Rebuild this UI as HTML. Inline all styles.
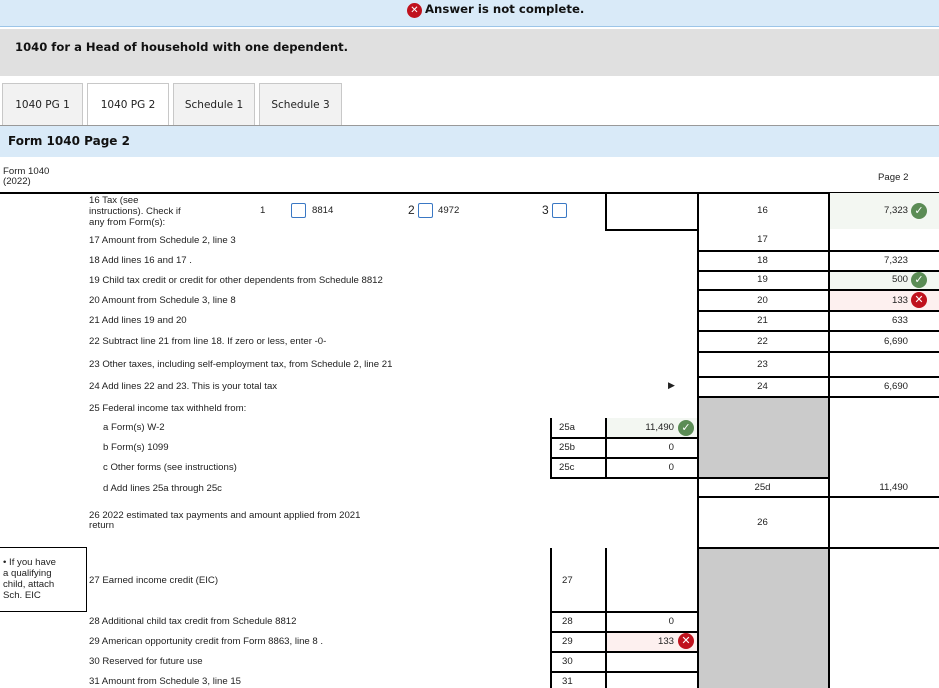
<!DOCTYPE html>
<html><head><meta charset="utf-8"><style>
*{margin:0;padding:0;box-sizing:border-box}
body{width:939px;height:688px;position:relative;overflow:hidden;background:#fff;font-family:"Liberation Sans",Arial,sans-serif;color:#222}
div{position:absolute}
.h{height:1.5px;background:#000}
.v{width:1.5px;background:#000}
.t{font-size:9.6px;white-space:nowrap;line-height:11px}
.c{text-align:center}
.r{text-align:right}
.ic{width:16px;height:16px;border-radius:50%;color:#fff;font-size:11px;font-weight:bold;text-align:center;line-height:16px;font-family:"DejaVu Sans",sans-serif}
.ok{background:#5b8c55}
.no{background:#c0121d}
.cb{width:15px;height:15px;border:1px solid #3a78c4;border-radius:2px;background:#fff}
.tab{top:83px;height:43px;border:1px solid #c8c8c8;border-bottom:none;background:#f2f2f2;font-family:"DejaVu Sans",Verdana,sans-serif;font-size:10.5px;text-align:center;line-height:42px;color:#222}
</style></head><body>
<div style="left:0;top:0;width:939px;height:27px;background:#d9eaf8;border-bottom:1px solid #9cc5e8"></div>
<div class="ic no" style="left:407px;top:3px;width:15px;height:15px;line-height:15px;font-size:10px">✕</div>
<div style="left:425px;top:2px;font-family:'DejaVu Sans',Verdana,sans-serif;font-weight:bold;font-size:11.7px;color:#111">Answer is not complete.</div>
<div style="left:0;top:29px;width:939px;height:47px;background:#e0e0e0"></div>
<div style="left:15px;top:40px;font-family:'DejaVu Sans',Verdana,sans-serif;font-weight:bold;font-size:11.6px;color:#111">1040 for a Head of household with one dependent.</div>
<div class="tab" style="left:2px;width:81px">1040 PG 1</div>
<div class="tab" style="left:87px;width:82px;background:#fff;height:44px">1040 PG 2</div>
<div class="tab" style="left:173px;width:82px">Schedule 1</div>
<div class="tab" style="left:259px;width:83px">Schedule 3</div>
<div style="left:0;top:125px;width:939px;height:1px;background:#999"></div>
<div style="left:0;top:126px;width:939px;height:31px;background:#d9eaf8"></div>
<div style="left:8px;top:134px;font-family:'DejaVu Sans',Verdana,sans-serif;font-weight:bold;font-size:12px;color:#111">Form 1040 Page 2</div>

<div class="t" style="left:3px;top:167px;line-height:10px">Form 1040<br>(2022)</div>
<div class="t" style="left:878px;top:172px">Page 2</div>
<div class="h" style="left:0;top:192px;width:939px"></div>

<div style="left:828px;top:193px;width:111px;height:36px;background:#f3f7f2"></div>
<div style="left:828px;top:271px;width:111px;height:18px;background:#f3f7f2"></div>
<div style="left:828px;top:290px;width:111px;height:20px;background:#fdf0ef"></div>
<div style="left:605px;top:418px;width:92px;height:19px;background:#f3f7f2"></div>
<div style="left:605px;top:631px;width:92px;height:20px;background:#fdf0ef"></div>
<div style="left:697px;top:396px;width:131px;height:81px;background:#cbcbcb"></div>
<div style="left:697px;top:547px;width:131px;height:141px;background:#cbcbcb"></div>

<div class="v" style="left:697px;top:192px;height:496px"></div>
<div class="v" style="left:828px;top:192px;height:496px"></div>
<div class="v" style="left:605px;top:192px;height:37px"></div>
<div class="v" style="left:550px;top:418px;height:59px"></div>
<div class="v" style="left:605px;top:418px;height:59px"></div>
<div class="v" style="left:550px;top:548px;height:140px"></div>
<div class="v" style="left:605px;top:548px;height:140px"></div>

<div class="h" style="left:605px;top:229px;width:92px"></div>
<div class="h" style="left:697px;top:250px;width:242px"></div>
<div class="h" style="left:697px;top:270px;width:242px"></div>
<div class="h" style="left:697px;top:289px;width:242px"></div>
<div class="h" style="left:697px;top:310px;width:242px"></div>
<div class="h" style="left:697px;top:330px;width:242px"></div>
<div class="h" style="left:697px;top:351px;width:242px"></div>
<div class="h" style="left:697px;top:376px;width:242px"></div>
<div class="h" style="left:697px;top:396px;width:242px"></div>
<div class="h" style="left:550px;top:437px;width:147px"></div>
<div class="h" style="left:550px;top:457px;width:147px"></div>
<div class="h" style="left:550px;top:477px;width:278px"></div>
<div class="h" style="left:697px;top:496px;width:242px"></div>
<div class="h" style="left:697px;top:547px;width:242px"></div>
<div class="h" style="left:550px;top:611px;width:147px"></div>
<div class="h" style="left:550px;top:631px;width:147px"></div>
<div class="h" style="left:550px;top:651px;width:147px"></div>
<div class="h" style="left:550px;top:671px;width:147px"></div>

<div style="left:0;top:547px;width:87px;height:65px;border:1.5px solid #000;border-left:none"></div>
<div class="t" style="left:3px;top:557px;line-height:11px">• If you have<br>a qualifying<br>child, attach<br>Sch. EIC</div>

<div class="t" style="left:89px;top:195px;line-height:11px">16 Tax (see<br>instructions). Check if<br>any from Form(s):</div>
<div class="t" style="left:260px;top:205px">1</div>
<div class="cb" style="left:291px;top:203px"></div>
<div class="t" style="left:312px;top:205px">8814</div>
<div class="t" style="left:408px;top:204px;font-size:12px;line-height:12px">2</div>
<div class="cb" style="left:418px;top:203px"></div>
<div class="t" style="left:438px;top:205px">4972</div>
<div class="t" style="left:542px;top:204px;font-size:12px;line-height:12px">3</div>
<div class="cb" style="left:552px;top:203px"></div>

<div class="t" style="left:89px;top:235px">17 Amount from Schedule 2, line 3</div>
<div class="t" style="left:89px;top:255px">18 Add lines 16 and 17 .</div>
<div class="t" style="left:89px;top:275px">19 Child tax credit or credit for other dependents from Schedule 8812</div>
<div class="t" style="left:89px;top:295px">20 Amount from Schedule 3, line 8</div>
<div class="t" style="left:89px;top:315px">21 Add lines 19 and 20</div>
<div class="t" style="left:89px;top:336px">22 Subtract line 21 from line 18. If zero or less, enter -0-</div>
<div class="t" style="left:89px;top:359px">23 Other taxes, including self-employment tax, from Schedule 2, line 21</div>
<div class="t" style="left:89px;top:381px">24 Add lines 22 and 23. This is your total tax</div>
<div class="t" style="left:668px;top:380px;font-size:9px">▶</div>
<div class="t" style="left:89px;top:403px">25 Federal income tax withheld from:</div>
<div class="t" style="left:103px;top:422px">a Form(s) W-2</div>
<div class="t" style="left:103px;top:442px">b Form(s) 1099</div>
<div class="t" style="left:103px;top:462px">c Other forms (see instructions)</div>
<div class="t" style="left:103px;top:483px">d Add lines 25a through 25c</div>
<div class="t" style="left:89px;top:511px;line-height:10px">26 2022 estimated tax payments and amount applied from 2021<br>return</div>
<div class="t" style="left:89px;top:575px">27 Earned income credit (EIC)</div>
<div class="t" style="left:89px;top:616px">28 Additional child tax credit from Schedule 8812</div>
<div class="t" style="left:89px;top:636px">29 American opportunity credit from Form 8863, line 8 .</div>
<div class="t" style="left:89px;top:656px">30 Reserved for future use</div>
<div class="t" style="left:89px;top:676px">31 Amount from Schedule 3, line 15</div>

<div class="t c" style="left:697px;width:131px;top:205px">16</div>
<div class="t c" style="left:697px;width:131px;top:234px">17</div>
<div class="t c" style="left:697px;width:131px;top:255px">18</div>
<div class="t c" style="left:697px;width:131px;top:274px">19</div>
<div class="t c" style="left:697px;width:131px;top:295px">20</div>
<div class="t c" style="left:697px;width:131px;top:315px">21</div>
<div class="t c" style="left:697px;width:131px;top:336px">22</div>
<div class="t c" style="left:697px;width:131px;top:359px">23</div>
<div class="t c" style="left:697px;width:131px;top:381px">24</div>
<div class="t c" style="left:697px;width:131px;top:482px">25d</div>
<div class="t c" style="left:697px;width:131px;top:517px">26</div>
<div class="t" style="left:559px;top:422px">25a</div>
<div class="t" style="left:559px;top:442px">25b</div>
<div class="t" style="left:559px;top:462px">25c</div>
<div class="t" style="left:562px;top:575px">27</div>
<div class="t" style="left:562px;top:616px">28</div>
<div class="t" style="left:562px;top:636px">29</div>
<div class="t" style="left:562px;top:656px">30</div>
<div class="t" style="left:562px;top:676px">31</div>

<div class="t r" style="left:830px;width:78px;top:205px">7,323</div>
<div class="ic ok" style="left:911px;top:203px">✓</div>
<div class="t r" style="left:830px;width:78px;top:255px">7,323</div>
<div class="t r" style="left:830px;width:78px;top:274px">500</div>
<div class="ic ok" style="left:911px;top:272px">✓</div>
<div class="t r" style="left:830px;width:78px;top:295px">133</div>
<div class="ic no" style="left:911px;top:292px">✕</div>
<div class="t r" style="left:830px;width:78px;top:315px">633</div>
<div class="t r" style="left:830px;width:78px;top:336px">6,690</div>
<div class="t r" style="left:830px;width:78px;top:381px">6,690</div>
<div class="t r" style="left:830px;width:78px;top:482px">11,490</div>
<div class="t r" style="left:607px;width:67px;top:422px">11,490</div>
<div class="ic ok" style="left:678px;top:420px">✓</div>
<div class="t r" style="left:607px;width:67px;top:442px">0</div>
<div class="t r" style="left:607px;width:67px;top:462px">0</div>
<div class="t r" style="left:607px;width:67px;top:616px">0</div>
<div class="t r" style="left:607px;width:67px;top:636px">133</div>
<div class="ic no" style="left:678px;top:633px">✕</div>
</body></html>
